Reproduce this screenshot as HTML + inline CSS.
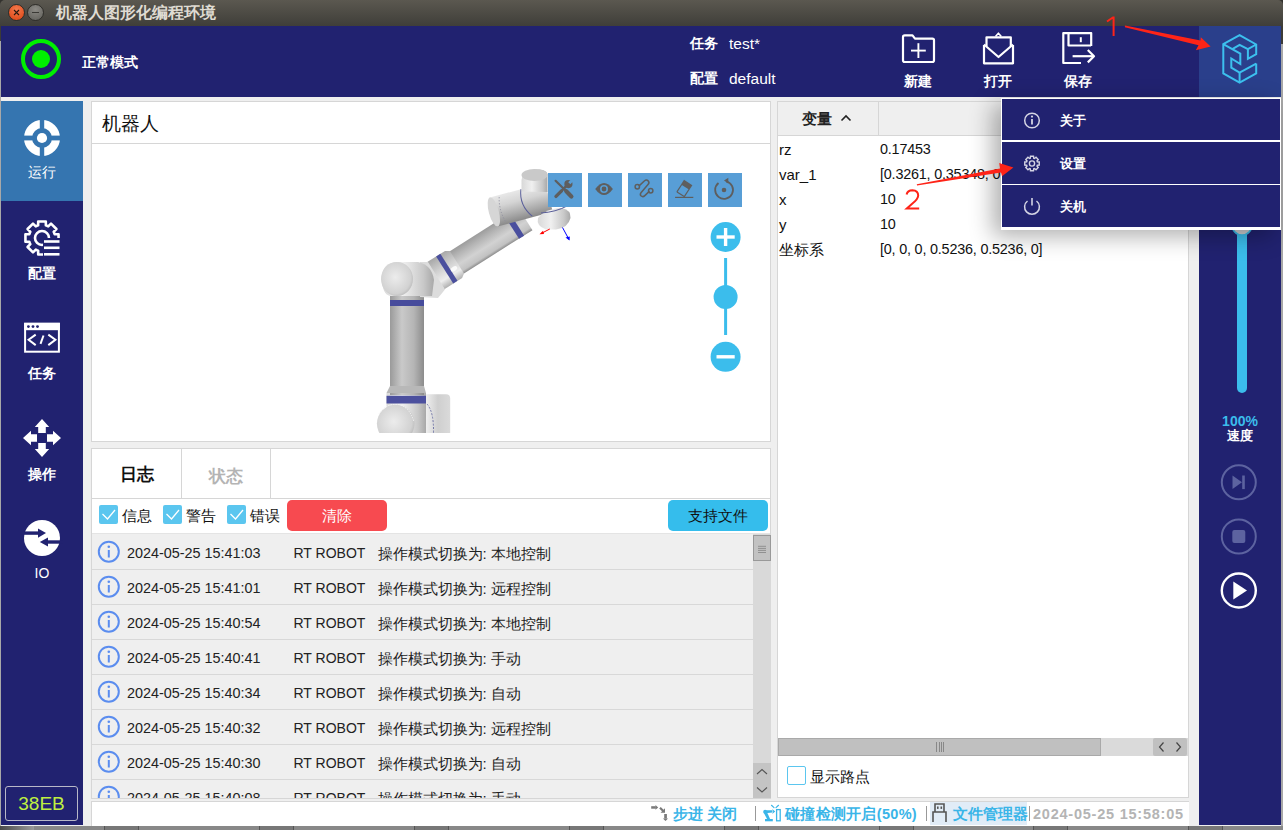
<!DOCTYPE html>
<html><head><meta charset="utf-8">
<style>
*{margin:0;padding:0;box-sizing:border-box}
html,body{width:1283px;height:830px;overflow:hidden;background:#efefef;font-family:"Liberation Sans",sans-serif;}
.a{position:absolute}
.t{position:absolute;white-space:nowrap;line-height:1}
</style></head>
<body>
<div class="a" id="root" style="left:0;top:0;width:1283px;height:830px;">

<!-- title bar -->
<div class="a" style="left:0;top:0;width:1283px;height:26px;background:#33322e"></div>
<div class="a" style="left:0;top:0;width:1283px;height:26px;background:linear-gradient(#5b5850,#3f3e39);border-radius:5px 5px 0 0"></div>
<div class="a" style="left:8px;top:4px;width:17px;height:17px;border-radius:50%;background:radial-gradient(circle at 50% 30%,#f57a4e,#e0501f 75%);border:1px solid #2e2d29"></div>
<svg class="a" style="left:13px;top:9px" width="7" height="7" viewBox="0 0 7 7"><path d="M1,1 L6,6 M6,1 L1,6" stroke="#2a1a10" stroke-width="1.1"/></svg>
<div class="a" style="left:27px;top:4px;width:17px;height:17px;border-radius:50%;background:radial-gradient(circle at 50% 30%,#8c8a85,#6a6964 75%);border:1px solid #2e2d29"></div>
<div class="a" style="left:32px;top:12px;width:7px;height:1px;background:#3a3935"></div>
<div class="t" style="left:55.5px;top:4.5px;font-size:16px;font-weight:bold;color:#dfdbd2">机器人图形化编程环境</div>

<!-- header -->
<div class="a" style="left:1px;top:26px;width:1280px;height:71px;background:#212270"></div>
<div class="a" style="left:1199px;top:26px;width:82px;height:71px;background:#2a3f8b"></div>
<div class="a" style="left:21px;top:39px;width:40px;height:40px;border-radius:50%;border:4px solid #00f000"></div>
<div class="a" style="left:32px;top:50px;width:18px;height:18px;border-radius:50%;background:#00f000"></div>
<div class="t" style="left:82px;top:55px;font-size:14px;font-weight:bold;color:#fff">正常模式</div>

<div class="t" style="left:690px;top:36px;font-size:14px;font-weight:bold;color:#fff">任务</div>
<div class="t" style="left:729px;top:36px;font-size:15.5px;color:#fff">test*</div>
<div class="t" style="left:690px;top:71px;font-size:14px;font-weight:bold;color:#fff">配置</div>
<div class="t" style="left:729px;top:71px;font-size:15.5px;color:#fff">default</div>


<!-- toolbar icons -->
<svg class="a" style="left:880px;top:26px" width="400" height="71" viewBox="880 26 400 71">
 <g fill="none" stroke="#fff" stroke-width="2.2" stroke-linejoin="round">
  <path d="M903,37 Q903,35.3 904.7,35.3 L912.5,35.3 L915,38.6 L932.4,38.6 Q934,38.6 934,40.3 L934,60.3 Q934,62 932.4,62 L904.7,62 Q903,62 903,60.3 Z"/>
  <line x1="918.4" y1="43.2" x2="918.4" y2="58" stroke-width="1.9"/>
  <line x1="911" y1="50.6" x2="925.8" y2="50.6" stroke-width="1.9"/>
  <!-- envelope -->
  <path d="M984,45 L984,63.3 L1013,63.3 L1013,45"/>
  <path d="M986.5,46 L986.5,37.3 L1010.8,37.3 L1010.8,46"/>
  <path d="M984,44.5 L998.5,57 L1013,44.5"/>
  <path d="M995.5,36.5 L998.4,33.2 L1001.3,36.5" stroke-width="1.6"/>
  <!-- save -->
  <path d="M1081,63 L1063.3,63 L1063.3,33.1 L1091.2,33.1 L1091.2,46"/>
  <path d="M1068.5,33.5 L1068.5,45.5 L1091,45.5"/>
  <line x1="1080.8" y1="37.2" x2="1080.8" y2="42.2" stroke-width="2"/>
  <line x1="1072.6" y1="56.2" x2="1093.5" y2="56.2"/>
  <polyline points="1087.8,50 1094,56.2 1087.8,62.4"/>
 </g>
 <!-- logo -->
 <g fill="none" stroke="#3cc0ee" stroke-width="2" stroke-linejoin="miter">
  <polyline points="1256.2,63.6 1256.2,73.4 1239.6,82.7 1223.3,73.4 1223.3,44.1 1239.6,35.1 1256.2,44.5 1256.2,54.2 1247.9,58.9 1247.9,49.1 1256.2,44.5"/>
  <polyline points="1223.3,44.1 1240.3,53.6 1240.3,64 1231.3,58.5 1231.3,67.6 1239.6,72.6 1256.2,63.6"/>
  <line x1="1239.6" y1="72.6" x2="1239.6" y2="82.7"/>
  <polyline points="1232.3,49.1 1239.6,44.8 1247.9,49.1"/>
 </g>
</svg>
<div class="t" style="left:898px;top:74px;width:40px;text-align:center;font-size:14px;font-weight:bold;color:#fff">新建</div>
<div class="t" style="left:978px;top:74px;width:40px;text-align:center;font-size:14px;font-weight:bold;color:#fff">打开</div>
<div class="t" style="left:1058px;top:74px;width:40px;text-align:center;font-size:14px;font-weight:bold;color:#fff">保存</div>

<!-- window borders -->
<div class="a" style="left:0;top:26px;width:1px;height:15px;background:#3c3b37"></div>
<div class="a" style="left:0;top:41px;width:1px;height:785px;background:#a8a8a8"></div>
<div class="a" style="left:1281px;top:26px;width:2px;height:18px;background:#3c3b37"></div>
<div class="a" style="left:1281px;top:44px;width:2px;height:782px;background:#a8a8a8"></div>
<div class="a" style="left:0;top:825.7px;width:1283px;height:5px;background:#888"></div>
<div class="a" style="left:0;top:825.7px;width:34px;height:5px;background:linear-gradient(90deg,#4a4a4a,#9a9a9a)"></div>
<div class="a" style="left:104px;top:825.7px;width:35px;height:5px;background:#777;border-left:1px solid #555;border-right:1px solid #555"></div>
<div class="a" style="left:259px;top:825.7px;width:35px;height:5px;background:#777;border-left:1px solid #555;border-right:1px solid #555"></div>
<div class="a" style="left:414px;top:825.7px;width:35px;height:5px;background:#777;border-left:1px solid #555;border-right:1px solid #555"></div>
<div class="a" style="left:569px;top:825.7px;width:35px;height:5px;background:#777;border-left:1px solid #555;border-right:1px solid #555"></div>
<div class="a" style="left:724px;top:825.7px;width:35px;height:5px;background:#777;border-left:1px solid #555;border-right:1px solid #555"></div>
<div class="a" style="left:879px;top:825.7px;width:35px;height:5px;background:#777;border-left:1px solid #555;border-right:1px solid #555"></div>
<div class="a" style="left:1033px;top:825.7px;width:35px;height:5px;background:#777;border-left:1px solid #555;border-right:1px solid #555"></div>
<div class="a" style="left:1188px;top:825.7px;width:35px;height:5px;background:#777;border-left:1px solid #555;border-right:1px solid #555"></div>

<!-- left sidebar -->
<div class="a" style="left:1px;top:101px;width:82px;height:724px;background:#212270"></div>
<div class="a" style="left:1px;top:101px;width:82px;height:100px;background:#3575b0"></div>


<!-- sidebar icons -->
<svg class="a" style="left:1px;top:101px" width="82" height="500" viewBox="0 0 82 500">
 <g transform="translate(41,37)">
  <circle r="14" fill="none" stroke="#fff" stroke-width="8"/>
  <rect x="-2.2" y="-19" width="4.4" height="38" fill="#3575b0"/>
  <rect x="-19" y="-2.4" width="38" height="4.8" fill="#3575b0"/>
  <circle r="5.1" fill="#fff"/>
 </g>
 <defs><mask id="gm"><rect x="0" y="0" width="82" height="500" fill="#fff"/><rect x="42" y="137" width="30" height="30" fill="#000"/></mask></defs>
 <g mask="url(#gm)" fill="none" stroke="#fff" stroke-width="2.6" stroke-linejoin="round">
  <path transform="translate(41,137)" d="M-5.05,-12.20 L-3.86,-12.62 L-3.82,-16.56 L3.82,-16.56 L3.86,-12.62 L5.05,-12.20 L5.05,-12.20 L6.20,-11.65 L9.01,-14.42 L14.42,-9.01 L11.65,-6.20 L12.20,-5.05 L12.20,-5.05 L12.62,-3.86 L16.56,-3.82 L16.56,3.82 L12.62,3.86 L12.20,5.05 L12.20,5.05 L11.65,6.20 L14.42,9.01 L9.01,14.42 L6.20,11.65 L5.05,12.20 L5.05,12.20 L3.86,12.62 L3.82,16.56 L-3.82,16.56 L-3.86,12.62 L-5.05,12.20 L-5.05,12.20 L-6.20,11.65 L-9.01,14.42 L-14.42,9.01 L-11.65,6.20 L-12.20,5.05 L-12.20,5.05 L-12.62,3.86 L-16.56,3.82 L-16.56,-3.82 L-12.62,-3.86 L-12.20,-5.05 L-12.20,-5.05 L-11.65,-6.20 L-14.42,-9.01 L-9.01,-14.42 L-6.20,-11.65 L-5.05,-12.20Z"/>
  <circle cx="41" cy="137" r="7" />
 </g>
 <g stroke="#fff" stroke-width="2.6">
  <line x1="43" y1="140.5" x2="58.5" y2="140.5"/>
  <line x1="43" y1="146.8" x2="58.5" y2="146.8"/>
  <line x1="43" y1="153.3" x2="58.5" y2="153.3"/>
 </g>
 <!-- task -->
 <rect x="24.1" y="222.8" width="33.8" height="27.9" fill="none" stroke="#fff" stroke-width="2"/>
 <rect x="23.1" y="221.8" width="35.8" height="7.4" fill="#fff"/>
 <circle cx="27.4" cy="225.6" r="1.4" fill="#212270"/>
 <circle cx="32" cy="225.6" r="1.4" fill="#212270"/>
 <circle cx="36.5" cy="225.6" r="1.4" fill="#212270"/>
 <g fill="none" stroke="#fff" stroke-width="2">
  <polyline points="34.7,233.6 27.6,238.7 34.7,244.1"/>
  <line x1="42.5" y1="234.5" x2="39.5" y2="242.9"/>
  <polyline points="47.3,233.6 54.4,238.7 47.3,244.1"/>
 </g>
 <!-- move -->
 <g transform="translate(41,337)" fill="#fff">
  <path id="mv" d="M0,-19 L7.2,-11 L3.8,-11 L3.8,-5 L-3.8,-5 L-3.8,-11 L-7.2,-11Z"/>
  <use href="#mv" transform="rotate(90)"/>
  <use href="#mv" transform="rotate(180)"/>
  <use href="#mv" transform="rotate(270)"/>
 </g>
 <!-- IO -->
 <circle cx="41" cy="437" r="18" fill="#fff"/>
 <g fill="#212270">
  <rect x="22" y="430.4" width="16" height="3.4"/>
  <path d="M37,427.5 L45,432.1 L37,436.7Z"/>
  <rect x="46" y="439.3" width="16" height="3.4"/>
  <path d="M47,436.4 L38.8,441 L47,445.6Z"/>
 </g>
</svg>
<div class="t" style="left:1px;top:165px;width:82px;text-align:center;font-size:14px;color:#fff">运行</div>
<div class="t" style="left:1px;top:266px;width:82px;text-align:center;font-size:14px;color:#fff;font-weight:bold">配置</div>
<div class="t" style="left:1px;top:366px;width:82px;text-align:center;font-size:14px;color:#fff;font-weight:bold">任务</div>
<div class="t" style="left:1px;top:467px;width:82px;text-align:center;font-size:14px;color:#fff;font-weight:bold">操作</div>
<div class="t" style="left:1px;top:566px;width:82px;text-align:center;font-size:14px;color:#fff">IO</div>

<!-- right sidebar -->
<div class="a" style="left:1199px;top:101px;width:82px;height:724px;background:#212270"></div>

<!-- robot panel -->
<div class="a" style="left:91px;top:101px;width:680px;height:341px;background:#fff;border:1px solid #d6d6d6"></div>
<div class="a" style="left:92px;top:143px;width:678px;height:1px;background:#d6d6d6"></div>
<div class="t" style="left:102px;top:114.5px;font-size:18.5px;color:#111;font-weight:500">机器人</div>


<!-- robot view -->
<svg class="a" style="left:92px;top:144px" width="678" height="297" viewBox="92 144 678 297">
 <defs>
  <linearGradient id="gv" x1="0" x2="1" y1="0" y2="0">
   <stop offset="0" stop-color="#9a9a9a"/><stop offset=".35" stop-color="#c9c9c9"/><stop offset=".7" stop-color="#b5b5b5"/><stop offset="1" stop-color="#8c8c8c"/>
  </linearGradient>
  <linearGradient id="gw" x1="0" x2="1" y1="0" y2="0">
   <stop offset="0" stop-color="#d8d8d8"/><stop offset=".4" stop-color="#f0f0f0"/><stop offset=".8" stop-color="#c8c8c8"/><stop offset="1" stop-color="#a8a8a8"/>
  </linearGradient>
  <radialGradient id="gf" cx=".45" cy=".45" r=".6">
   <stop offset="0" stop-color="#ececec"/><stop offset=".8" stop-color="#d2d2d2"/><stop offset="1" stop-color="#b8b8b8"/>
  </radialGradient>
  <linearGradient id="ga" x1="0" x2="0" y1="0" y2="1">
   <stop offset="0" stop-color="#e8e8e8"/><stop offset=".35" stop-color="#d4d4d4"/><stop offset=".75" stop-color="#a8a8a8"/><stop offset="1" stop-color="#8a8a8a"/>
  </linearGradient>
  <linearGradient id="gt" x1="0" x2="0" y1="0" y2="1">
   <stop offset="0" stop-color="#9c9c9c"/><stop offset=".25" stop-color="#b4b4b4"/><stop offset=".6" stop-color="#d2d2d2"/><stop offset=".88" stop-color="#c2c2c2"/><stop offset="1" stop-color="#8c8c8c"/>
  </linearGradient>
  <linearGradient id="gc" x1="0" x2="0" y1="0" y2="1">
   <stop offset="0" stop-color="#a8a8a8"/><stop offset=".4" stop-color="#cfcfcf"/><stop offset=".75" stop-color="#ededed"/><stop offset="1" stop-color="#b0b0b0"/>
  </linearGradient>
  <clipPath id="rc"><rect x="92" y="144" width="678" height="289"/></clipPath>
 </defs>
 <g clip-path="url(#rc)">
  <!-- base -->
  <linearGradient id="gb" x1="0" x2="1" y1="0" y2="0"><stop offset="0" stop-color="#f0f0f0"/><stop offset=".5" stop-color="#cfcfcf"/><stop offset="1" stop-color="#dadada"/></linearGradient>
  <path d="M425.5,394.2 L446,394.2 Q450.2,394.2 450.2,398.5 L450.2,433 L425.5,433Z" fill="url(#gb)"/>
  <path d="M427,404 Q434,412 433.5,433" fill="none" stroke="#5a5f9a" stroke-width=".8" stroke-dasharray="2,1.5"/>
  <rect x="386.5" y="393" width="39.5" height="40" fill="url(#gw)"/>
  <circle cx="395.7" cy="423.6" r="18.8" fill="url(#gf)"/>
  <path d="M379,414 Q386,403 398,404.5 Q410,407 414,422" fill="none" stroke="#f4f4f4" stroke-width="1" stroke-dasharray="1.5,1"/>
  <!-- vertical link -->
  <rect x="390" y="296" width="34" height="99" fill="url(#gv)"/>
  <path d="M390,386 L424,386 L426,393 L386.5,393Z" fill="#b8b8b8"/>
  <rect x="386.5" y="395.8" width="39.5" height="7.7" fill="#4c509e"/>
  <rect x="390" y="300" width="34" height="6" fill="#474c9c"/>
  <!-- upper arm -->
  <g transform="translate(456.1,262.8) rotate(-32.3)">
   <rect x="0" y="-13.2" width="82" height="26.4" fill="url(#gt)"/>
   <path d="M-24,-16 L-3,-16 L1,-13.2 L1,13.2 L-3,16 L-24,16Z" fill="url(#gc)"/>
   <rect x="-13.5" y="-16" width="5" height="32" fill="#4a4f9e"/>
   <rect x="66" y="-13.4" width="6" height="26.8" fill="#4a4f9e"/>
   <ellipse cx="-5" cy="4" rx="3.5" ry="2.2" fill="#fafafa"/>
  </g>
  <!-- elbow joint -->
  <path d="M420,262 L428,262 L445,289.5 L438,298 L420,297Z" fill="#dcdcdc"/>
  <path d="M382,278 Q382,262 398,262 L418,262 Q432,265 434,280 L432,296 L390,296 Q382,294 382,278Z" fill="url(#gw)"/>
  <ellipse cx="397" cy="279" rx="16" ry="17" fill="url(#gf)"/>
  <!-- wrist 1 -->
  <g transform="translate(490,213) rotate(-15)">
   <rect x="3" y="-15" width="58" height="30" fill="url(#ga)"/>
   <ellipse cx="4" cy="0" rx="5" ry="15" fill="#d6d6d6"/>
   <path d="M13,-13 Q9,0 13,13" fill="none" stroke="#8c8c9c" stroke-width=".8" stroke-dasharray="1.2,1.8"/>
   <path d="M36,-15 Q30,0 40,14" fill="none" stroke="#5a5f9a" stroke-width="1"/>
  </g>
  <!-- wrist 2 top -->
  <path d="M521.5,191.5 L521.5,180 Q523,170 535,169 Q546,169 547.5,174 L547.5,192Z" fill="url(#gw)"/>
  <ellipse cx="534.5" cy="175" rx="13" ry="6" fill="#c9c9c9"/>
  <!-- flange -->
  <path d="M538,218 Q546,208 562,208 Q571,210 570.5,218 Q568,228 556,229.5 L546,229.5 Q536,226 538,218Z" fill="url(#gw)"/>
  <path d="M541,213 Q556,212 567,206" fill="none" stroke="#5a5f9a" stroke-width="1"/>
  <!-- frame arrows -->
  <line x1="549.8" y1="229" x2="541" y2="233.6" stroke="#f00" stroke-width="1"/>
  <path d="M539.5,234.3 L543,230.7 L544,234Z" fill="#f00"/>
  <line x1="562.5" y1="227.5" x2="569" y2="239.5" stroke="#00f" stroke-width="1"/>
  <path d="M569.5,240.5 L565.5,237.5 L569.8,236.5Z" fill="#00f"/>
 </g>
 <!-- tool buttons -->
 <g fill="#589ed6">
  <rect x="548" y="173" width="34" height="34"/>
  <rect x="588" y="173" width="34" height="34"/>
  <rect x="628" y="173" width="34" height="34"/>
  <rect x="668" y="173" width="34" height="34"/>
  <rect x="708" y="173" width="34" height="34"/>
 </g>
 <g transform="translate(548,173)" stroke="#5e5e5e" fill="none" stroke-linecap="round">
  <line x1="7.6" y1="7.8" x2="17.5" y2="17.5" stroke-width="2.2"/>
  <line x1="18.3" y1="18.3" x2="23.4" y2="23.4" stroke-width="4.2"/>
  <line x1="8" y1="23.4" x2="13.3" y2="18.1" stroke-width="3.4"/>
  <line x1="13" y1="18.4" x2="18.5" y2="12.9" stroke-width="2.6"/>
  <circle cx="20.4" cy="11.1" r="4.1" fill="#5e5e5e" stroke="none"/>
  <rect x="-1.5" y="-6.5" width="3" height="5.5" fill="#589ed6" stroke="none" transform="translate(20.6,10.9) rotate(45)"/>
 </g>
 <path d="M595.2,189 Q604,177 612.9,189 Q604,201 595.2,189Z" fill="#5e5e5e"/>
 <circle cx="604" cy="189" r="3.2" fill="none" stroke="#589ed6" stroke-width="1.6"/>
 <circle cx="604" cy="189" r="2" fill="#5e5e5e"/>
 <g fill="none" stroke="#5e5e5e" stroke-width="1.5">
  <circle cx="637.3" cy="186.8" r="2.2"/>
  <circle cx="650.7" cy="190.8" r="2.2"/>
  <path d="M639.3,185.6 L644.3,181 Q646.5,179.2 648.2,180.9 Q649.8,182.6 648,184.6 L641.2,192.4 Q639.5,194.6 641.2,196 Q643,197.4 644.8,195.6 L649,191.6" stroke-linecap="round"/>
  <line x1="675.1" y1="197.4" x2="693.3" y2="197.4" stroke-width="1.2"/>
 </g>
 <g transform="translate(684.2,188.7) rotate(33)">
  <rect x="-5" y="-7.3" width="10" height="5.4" fill="#5e5e5e"/>
  <path d="M-4.4,-2.2 L-4.4,6 Q-4.4,6.6 -3.8,6.6 L3.8,6.6 Q4.4,6.6 4.4,6 L4.4,-2.2" fill="none" stroke="#5e5e5e" stroke-width="1.2"/>
 </g>
 <path d="M718.5,183 A8.9,8.9 0 1,0 726.2,181.3" fill="none" stroke="#5e5e5e" stroke-width="1.8"/>
 <path d="M724,180.6 L728.3,177.7 L728.3,183.5Z" fill="#5e5e5e"/>
 <circle cx="724" cy="190" r="2.3" fill="#5e5e5e"/>
 <!-- zoom controls -->
 <line x1="725.6" y1="258" x2="725.6" y2="335" stroke="#3bbdec" stroke-width="3"/>
 <circle cx="725.6" cy="237" r="15" fill="#3bbdec"/>
 <circle cx="725.6" cy="297" r="12" fill="#3bbdec"/>
 <circle cx="725.6" cy="356.8" r="15" fill="#3bbdec"/>
 <g stroke="#fff" stroke-width="3.4">
  <line x1="716.5" y1="237" x2="734.7" y2="237"/>
  <line x1="725.6" y1="228" x2="725.6" y2="246"/>
  <line x1="716.5" y1="356.8" x2="734.7" y2="356.8"/>
 </g>
</svg>

<!-- log panel -->
<div class="a" style="left:91px;top:448px;width:680px;height:351px;background:#fff;border:1px solid #d6d6d6"></div>


<div class="a" style="left:92px;top:498px;width:678px;height:1px;background:#d6d6d6"></div>
<div class="a" style="left:181px;top:449px;width:1px;height:49px;background:#d6d6d6"></div>
<div class="a" style="left:270px;top:449px;width:1px;height:49px;background:#d6d6d6"></div>
<div class="t" style="left:92px;top:466px;width:89px;text-align:center;font-size:17px;font-weight:bold;color:#111">日志</div>
<div class="t" style="left:182px;top:467.5px;width:88px;text-align:center;font-size:17px;font-weight:bold;color:#b4b4b4">状态</div>
<svg class="a" style="left:92px;top:499px" width="300" height="35" viewBox="92 499 300 35">
 <g fill="#5bc6ef"><rect x="99" y="505" width="19" height="19" rx="2"/><rect x="163" y="505" width="19" height="19" rx="2"/><rect x="227" y="505" width="19" height="19" rx="2"/></g>
 <g fill="none" stroke="#fff" stroke-width="1.3">
  <polyline points="102.5,514 107.5,519 115,510"/>
  <polyline points="166.5,514 171.5,519 179,510"/>
  <polyline points="230.5,514 235.5,519 243,510"/>
 </g>
</svg>
<div class="t" style="left:122px;top:508px;font-size:15px;color:#111">信息</div>
<div class="t" style="left:186px;top:508px;font-size:15px;color:#111">警告</div>
<div class="t" style="left:250px;top:508px;font-size:15px;color:#111">错误</div>
<div class="a" style="left:287px;top:500px;width:100px;height:31px;background:#f74a50;border-radius:5px"></div>
<div class="t" style="left:287px;top:508px;width:100px;text-align:center;font-size:15px;color:#fff">清除</div>
<div class="a" style="left:668px;top:500px;width:100px;height:31px;background:#35bdec;border-radius:5px"></div>
<div class="t" style="left:668px;top:508px;width:100px;text-align:center;font-size:15px;color:#111">支持文件</div>
<div class="a" style="left:92px;top:533px;width:678px;height:1px;background:#e4e4e4"></div>
<div class="a" style="left:92px;top:534px;width:661px;height:264px;overflow:hidden;background:#efefef">
<div class="a" style="left:0;top:35px;width:661px;height:1px;background:#d8d8d8"></div>
<svg class="a" style="left:5px;top:6px" width="24" height="24" viewBox="0 0 24 24"><circle cx="11.8" cy="11.7" r="10" fill="none" stroke="#5b8def" stroke-width="2"/><rect x="10.8" y="10" width="2" height="7.5" fill="#5b8def"/><circle cx="11.8" cy="6.8" r="1.3" fill="#5b8def"/></svg>
<div class="t" style="left:35px;top:12px;font-size:14.4px;color:#222">2024-05-25 15:41:03</div>
<div class="t" style="left:201.5px;top:12px;font-size:14px;color:#222">RT ROBOT</div>
<div class="t" style="left:285.5px;top:12px;font-size:15px;color:#222">操作模式切换为: 本地控制</div>
<div class="a" style="left:0;top:70px;width:661px;height:1px;background:#d8d8d8"></div>
<svg class="a" style="left:5px;top:41px" width="24" height="24" viewBox="0 0 24 24"><circle cx="11.8" cy="11.7" r="10" fill="none" stroke="#5b8def" stroke-width="2"/><rect x="10.8" y="10" width="2" height="7.5" fill="#5b8def"/><circle cx="11.8" cy="6.8" r="1.3" fill="#5b8def"/></svg>
<div class="t" style="left:35px;top:47px;font-size:14.4px;color:#222">2024-05-25 15:41:01</div>
<div class="t" style="left:201.5px;top:47px;font-size:14px;color:#222">RT ROBOT</div>
<div class="t" style="left:285.5px;top:47px;font-size:15px;color:#222">操作模式切换为: 远程控制</div>
<div class="a" style="left:0;top:105px;width:661px;height:1px;background:#d8d8d8"></div>
<svg class="a" style="left:5px;top:76px" width="24" height="24" viewBox="0 0 24 24"><circle cx="11.8" cy="11.7" r="10" fill="none" stroke="#5b8def" stroke-width="2"/><rect x="10.8" y="10" width="2" height="7.5" fill="#5b8def"/><circle cx="11.8" cy="6.8" r="1.3" fill="#5b8def"/></svg>
<div class="t" style="left:35px;top:82px;font-size:14.4px;color:#222">2024-05-25 15:40:54</div>
<div class="t" style="left:201.5px;top:82px;font-size:14px;color:#222">RT ROBOT</div>
<div class="t" style="left:285.5px;top:82px;font-size:15px;color:#222">操作模式切换为: 本地控制</div>
<div class="a" style="left:0;top:140px;width:661px;height:1px;background:#d8d8d8"></div>
<svg class="a" style="left:5px;top:111px" width="24" height="24" viewBox="0 0 24 24"><circle cx="11.8" cy="11.7" r="10" fill="none" stroke="#5b8def" stroke-width="2"/><rect x="10.8" y="10" width="2" height="7.5" fill="#5b8def"/><circle cx="11.8" cy="6.8" r="1.3" fill="#5b8def"/></svg>
<div class="t" style="left:35px;top:117px;font-size:14.4px;color:#222">2024-05-25 15:40:41</div>
<div class="t" style="left:201.5px;top:117px;font-size:14px;color:#222">RT ROBOT</div>
<div class="t" style="left:285.5px;top:117px;font-size:15px;color:#222">操作模式切换为: 手动</div>
<div class="a" style="left:0;top:175px;width:661px;height:1px;background:#d8d8d8"></div>
<svg class="a" style="left:5px;top:146px" width="24" height="24" viewBox="0 0 24 24"><circle cx="11.8" cy="11.7" r="10" fill="none" stroke="#5b8def" stroke-width="2"/><rect x="10.8" y="10" width="2" height="7.5" fill="#5b8def"/><circle cx="11.8" cy="6.8" r="1.3" fill="#5b8def"/></svg>
<div class="t" style="left:35px;top:152px;font-size:14.4px;color:#222">2024-05-25 15:40:34</div>
<div class="t" style="left:201.5px;top:152px;font-size:14px;color:#222">RT ROBOT</div>
<div class="t" style="left:285.5px;top:152px;font-size:15px;color:#222">操作模式切换为: 自动</div>
<div class="a" style="left:0;top:210px;width:661px;height:1px;background:#d8d8d8"></div>
<svg class="a" style="left:5px;top:181px" width="24" height="24" viewBox="0 0 24 24"><circle cx="11.8" cy="11.7" r="10" fill="none" stroke="#5b8def" stroke-width="2"/><rect x="10.8" y="10" width="2" height="7.5" fill="#5b8def"/><circle cx="11.8" cy="6.8" r="1.3" fill="#5b8def"/></svg>
<div class="t" style="left:35px;top:187px;font-size:14.4px;color:#222">2024-05-25 15:40:32</div>
<div class="t" style="left:201.5px;top:187px;font-size:14px;color:#222">RT ROBOT</div>
<div class="t" style="left:285.5px;top:187px;font-size:15px;color:#222">操作模式切换为: 远程控制</div>
<div class="a" style="left:0;top:245px;width:661px;height:1px;background:#d8d8d8"></div>
<svg class="a" style="left:5px;top:216px" width="24" height="24" viewBox="0 0 24 24"><circle cx="11.8" cy="11.7" r="10" fill="none" stroke="#5b8def" stroke-width="2"/><rect x="10.8" y="10" width="2" height="7.5" fill="#5b8def"/><circle cx="11.8" cy="6.8" r="1.3" fill="#5b8def"/></svg>
<div class="t" style="left:35px;top:222px;font-size:14.4px;color:#222">2024-05-25 15:40:30</div>
<div class="t" style="left:201.5px;top:222px;font-size:14px;color:#222">RT ROBOT</div>
<div class="t" style="left:285.5px;top:222px;font-size:15px;color:#222">操作模式切换为: 自动</div>
<div class="a" style="left:0;top:280px;width:661px;height:1px;background:#d8d8d8"></div>
<svg class="a" style="left:5px;top:251px" width="24" height="24" viewBox="0 0 24 24"><circle cx="11.8" cy="11.7" r="10" fill="none" stroke="#5b8def" stroke-width="2"/><rect x="10.8" y="10" width="2" height="7.5" fill="#5b8def"/><circle cx="11.8" cy="6.8" r="1.3" fill="#5b8def"/></svg>
<div class="t" style="left:35px;top:257px;font-size:14.4px;color:#222">2024-05-25 15:40:08</div>
<div class="t" style="left:201.5px;top:257px;font-size:14px;color:#222">RT ROBOT</div>
<div class="t" style="left:285.5px;top:257px;font-size:15px;color:#222">操作模式切换为: 手动</div>
</div>
<!-- log scrollbar -->
<div class="a" style="left:753px;top:534px;width:18px;height:264px;background:#d9d9d9"></div>
<div class="a" style="left:753px;top:535px;width:18px;height:26px;background:#c2c2c2;border:1px solid #999"></div>
<svg class="a" style="left:753px;top:535px" width="18" height="26" viewBox="753 535 18 26"><g stroke="#8a8a8a" stroke-width="0.9"><line x1="758" y1="546.3" x2="766" y2="546.3"/><line x1="758" y1="548.4" x2="766" y2="548.4"/><line x1="758" y1="550.4" x2="766" y2="550.4"/><line x1="758" y1="552.5" x2="766" y2="552.5"/></g></svg>
<div class="a" style="left:753px;top:763px;width:18px;height:35px;background:#c4c4c4"></div>
<svg class="a" style="left:753px;top:763px" width="18" height="35" viewBox="0 0 18 35"><g fill="none" stroke="#555" stroke-width="1.1"><polyline points="4,11 9,6.5 14,11"/><polyline points="4,24.5 9,29 14,24.5"/></g></svg>

<!-- var panel -->
<div class="a" style="left:777px;top:101px;width:412px;height:697px;background:#fff;border:1px solid #d6d6d6"></div>


<div class="a" style="left:778px;top:102px;width:410px;height:33px;background:#efefef"></div>
<div class="a" style="left:778px;top:135px;width:410px;height:1px;background:#d6d6d6"></div>
<div class="a" style="left:878px;top:102px;width:1px;height:33px;background:#d6d6d6"></div>
<div class="t" style="left:802px;top:111px;font-size:15px;font-weight:bold;color:#222">变量</div>
<svg class="a" style="left:838px;top:110px" width="16" height="16" viewBox="0 0 16 16"><polyline points="3.5,10.5 8,6 12.5,10.5" fill="none" stroke="#222" stroke-width="1.6"/></svg>
<div class="t" style="left:779px;top:142px;font-size:15px;color:#111">rz</div>
<div class="t" style="left:880px;top:142px;font-size:14.4px;color:#111;letter-spacing:-.2px">0.17453</div>
<div class="t" style="left:779px;top:167px;font-size:15px;color:#111">var_1</div>
<div class="t" style="left:880px;top:167px;font-size:14.4px;color:#111;letter-spacing:-.2px">[0.3261, 0.35348, 0.5</div>
<div class="t" style="left:779px;top:192px;font-size:15px;color:#111">x</div>
<div class="t" style="left:880px;top:192px;font-size:14.4px;color:#111;letter-spacing:-.2px">10</div>
<div class="t" style="left:779px;top:217px;font-size:15px;color:#111">y</div>
<div class="t" style="left:880px;top:217px;font-size:14.4px;color:#111;letter-spacing:-.2px">10</div>
<div class="t" style="left:779px;top:242px;font-size:15px;color:#111">坐标系</div>
<div class="t" style="left:880px;top:242px;font-size:14.4px;color:#111;letter-spacing:-.2px">[0, 0, 0, 0.5236, 0.5236, 0]</div>

<!-- h scrollbar -->
<div class="a" style="left:778px;top:738px;width:410px;height:18px;background:#dadada"></div>
<div class="a" style="left:778px;top:738px;width:323px;height:18px;background:#c0c0c0;border:1px solid #a9a9a9"></div>
<div class="a" style="left:936px;top:742px;width:8px;height:10px;border-left:1px solid #888;border-right:1px solid #888"></div>
<div class="a" style="left:938.5px;top:742px;width:3px;height:10px;border-left:1px solid #888;border-right:1px solid #888"></div>
<div class="a" style="left:1153px;top:738px;width:34px;height:18px;background:#c0c0c0;border-radius:2px"></div>
<svg class="a" style="left:1153px;top:738px" width="34" height="18" viewBox="0 0 34 18"><g fill="none" stroke="#444" stroke-width="1.2"><polyline points="10.5,4.5 6.5,9 10.5,13.5"/><polyline points="23.5,4.5 27.5,9 23.5,13.5"/></g></svg>
<div class="a" style="left:787px;top:766px;width:19px;height:19px;border:1.5px solid #5bc6ef;border-radius:2px;background:#fff"></div>
<div class="t" style="left:810px;top:769px;font-size:15px;color:#111">显示路点</div>

<!-- status bar -->
<div class="a" style="left:91px;top:801px;width:1098px;height:25px;background:#fff;border-left:1px solid #d6d6d6;border-top:1px solid #d6d6d6"></div>


<!-- status bar content -->
<svg class="a" style="left:640px;top:801px" width="160" height="24" viewBox="640 801 160 24">
 <g fill="#7a7a7a">
  <rect x="651.2" y="806.2" width="4.6" height="2.5"/>
  <path d="M655.5,805 L658.2,807.4 L655.5,809.8Z"/>
  <path d="M659.2,808.6 L660.8,807 L663.5,809.7 L665,808.3 L665,812.8 L660.6,812.8 L662,811.3Z"/>
  <rect x="664.2" y="814" width="2.7" height="4.6"/>
  <path d="M662.9,818.4 L668.1,818.4 L665.5,821.1Z"/>
 </g>
 <line x1="755.5" y1="806" x2="755.5" y2="821" stroke="#999" stroke-width="1"/>
 <g fill="#3ab5e8">
  <rect x="765" y="819" width="7.8" height="2.3"/>
  <path d="M763.6,812.5 L766.6,811.3 L770.2,819.3 L767.2,819.3Z"/>
  <circle cx="765.1" cy="811.7" r="1.9"/>
  <path d="M765,810.2 L772.5,810.3 L772.5,812.4 L765,813.3Z"/>
  <path d="M772.2,809 L775.2,811.5 L772.2,814 L773.2,811.5Z"/>
 </g>
 <rect x="776.6" y="809.6" width="3.6" height="11.2" fill="none" stroke="#3ab5e8" stroke-width="1.3"/>
 <g stroke="#3ab5e8" stroke-width="1.2" stroke-linecap="round">
  <line x1="771.5" y1="805.3" x2="774" y2="807.6"/>
  <line x1="778.5" y1="805.3" x2="776" y2="807.6"/>
 </g>
</svg>
<div class="t" style="left:673px;top:807px;font-size:14.5px;font-weight:bold;color:#3ab5e8">步进 关闭</div>
<div class="t" style="left:785px;top:807px;font-size:14.5px;font-weight:bold;color:#3ab5e8;letter-spacing:.3px">碰撞检测开启(50%)</div>
<div class="a" style="left:926px;top:806px;width:1px;height:15px;background:#999"></div>
<div class="a" style="left:930px;top:802px;width:97px;height:23px;background:#e1ecf7"></div>
<svg class="a" style="left:930px;top:801px" width="20" height="24" viewBox="930 801 20 24"><g fill="none" stroke="#555" stroke-width="1.6"><path d="M933,822 L933,812 L946,812 L946,822"/><path d="M935,812 L935,804 L944,804 L944,812"/></g><rect x="937" y="806.5" width="1.6" height="2.4" fill="#555"/><rect x="940.5" y="806.5" width="1.6" height="2.4" fill="#555"/></svg>
<div class="t" style="left:953px;top:807px;font-size:14.5px;font-weight:bold;color:#3ab5e8">文件管理器</div>
<div class="a" style="left:1029px;top:806px;width:1px;height:15px;background:#999"></div>
<div class="t" style="left:1033px;top:807px;font-size:14.5px;font-weight:bold;color:#b4b4b4;letter-spacing:.77px">2024-05-25 15:58:05</div>

<!-- right sidebar controls -->
<svg class="a" style="left:1199px;top:101px" width="82" height="520" viewBox="1199 101 82 520">
 <line x1="1242" y1="228" x2="1242" y2="388" stroke="#3bbdec" stroke-width="10" stroke-linecap="round"/>
 <circle cx="1242" cy="225" r="10" fill="#cfcfd2" stroke="#3bbdec" stroke-width="1.6"/>
 <g fill="none" stroke="#5d63a0" stroke-width="2">
  <circle cx="1238.8" cy="482.3" r="17"/>
  <circle cx="1238.8" cy="536.4" r="17"/>
 </g>
 <path d="M1232.5,475.5 L1242,482.3 L1232.5,489.1Z" fill="#5d63a0"/>
 <rect x="1242.2" y="475.5" width="2.6" height="13.6" fill="#5d63a0"/>
 <rect x="1232.3" y="529.9" width="13" height="13" rx="2" fill="#5d63a0"/>
 <circle cx="1238.8" cy="590.5" r="17" fill="none" stroke="#fff" stroke-width="2.4"/>
 <path d="M1233.3,581.5 L1247,590.5 L1233.3,599.5Z" fill="#fff"/>
</svg>
<div class="t" style="left:1199px;top:414px;width:82px;text-align:center;font-size:14px;font-weight:bold;color:#3bbdec">100%</div>
<div class="t" style="left:1199px;top:429px;width:82px;text-align:center;font-size:13px;font-weight:bold;color:#fff">速度</div>

<!-- 38EB box -->
<div class="a" style="left:5px;top:786px;width:73px;height:35px;border:1px solid #b8b8c8;border-radius:3px"></div>
<div class="t" style="left:5px;top:794px;width:73px;text-align:center;font-size:19px;color:#bff040">38EB</div>

<!-- menu -->
<div class="a" style="left:1001px;top:98px;width:280px;height:132px;background:#fff;box-shadow:-8px 6px 22px rgba(0,0,0,.32)"></div>
<div class="a" style="left:1002px;top:99px;width:278px;height:41px;background:#212270"></div>
<div class="a" style="left:1002px;top:142px;width:278px;height:42px;background:#212270"></div>
<div class="a" style="left:1002px;top:185px;width:278px;height:42px;background:#212270"></div>


<svg class="a" style="left:1002px;top:99px" width="60" height="130" viewBox="1002 99 60 130">
 <g fill="none" stroke="#d4d4e4" stroke-width="1.5">
  <circle cx="1032" cy="120.5" r="7.3"/>
  <line x1="1032" y1="119" x2="1032" y2="124.5" stroke-width="1.8"/>
  <path d="M1028.8,157.2 A7.3,7.3 0 1,0 1035.2,157.2" stroke="none"/>
  <path d="M1027.5,201 A7.4,7.4 0 1,0 1036.5,201"/>
  <line x1="1032" y1="198" x2="1032" y2="205.5" stroke-width="1.6"/>
 </g>
 <circle cx="1032" cy="116.6" r="1.1" fill="#d4d4e4"/>
 <g transform="translate(1032,163.5)" fill="none" stroke="#d4d4e4" stroke-width="1.4">
  <path d="M-1.73,-5.33 L-1.54,-7.24 L1.54,-7.24 L1.73,-5.33 L2.54,-4.99 L4.03,-6.21 L6.21,-4.03 L4.99,-2.54 L5.33,-1.73 L7.24,-1.54 L7.24,1.54 L5.33,1.73 L4.99,2.54 L6.21,4.03 L4.03,6.21 L2.54,4.99 L1.73,5.33 L1.54,7.24 L-1.54,7.24 L-1.73,5.33 L-2.54,4.99 L-4.03,6.21 L-6.21,4.03 L-4.99,2.54 L-5.33,1.73 L-7.24,1.54 L-7.24,-1.54 L-5.33,-1.73 L-4.99,-2.54 L-6.21,-4.03 L-4.03,-6.21 L-2.54,-4.99Z"/>
  <circle r="2.6"/>
 </g>
</svg>
<div class="t" style="left:1060px;top:114px;font-size:13px;font-weight:bold;color:#fff">关于</div>
<div class="t" style="left:1060px;top:157px;font-size:13px;font-weight:bold;color:#fff">设置</div>
<div class="t" style="left:1060px;top:200px;font-size:13px;font-weight:bold;color:#fff">关机</div>

<!-- annotations -->
<svg class="a" style="left:0;top:0" width="1283" height="830" viewBox="0 0 1283 830">
 <path d="M1124.9,25.6 L1200.5,40.5 L1200.8,37.2 L1210.6,46.5 L1195.8,50.3 L1198.5,45.3 L1124.9,27.2Z" fill="#fe2418"/>
 <path d="M916.8,184.2 L1000,168.5 L999.2,163.1 L1013.4,167.5 L1002,176.2 L1001,172.5 L917,185.4Z" fill="#fe2418"/>
</svg>
<svg class="a" style="left:0;top:0" width="1283" height="830" viewBox="0 0 1283 830"><g fill="none" stroke="#fe2418" stroke-width="2">
 <path d="M1113.6,16.5 L1113.6,36 M1113.6,17 L1107,21.5"/>
 <path d="M906.6,194.5 Q907.5,190.2 912.5,190.2 Q918.2,190.4 918.2,195.5 Q918,199 913,203 L906.8,208.4 L919.2,208.4" stroke-linejoin="miter"/>
</g></svg>

</div>
</body></html>
